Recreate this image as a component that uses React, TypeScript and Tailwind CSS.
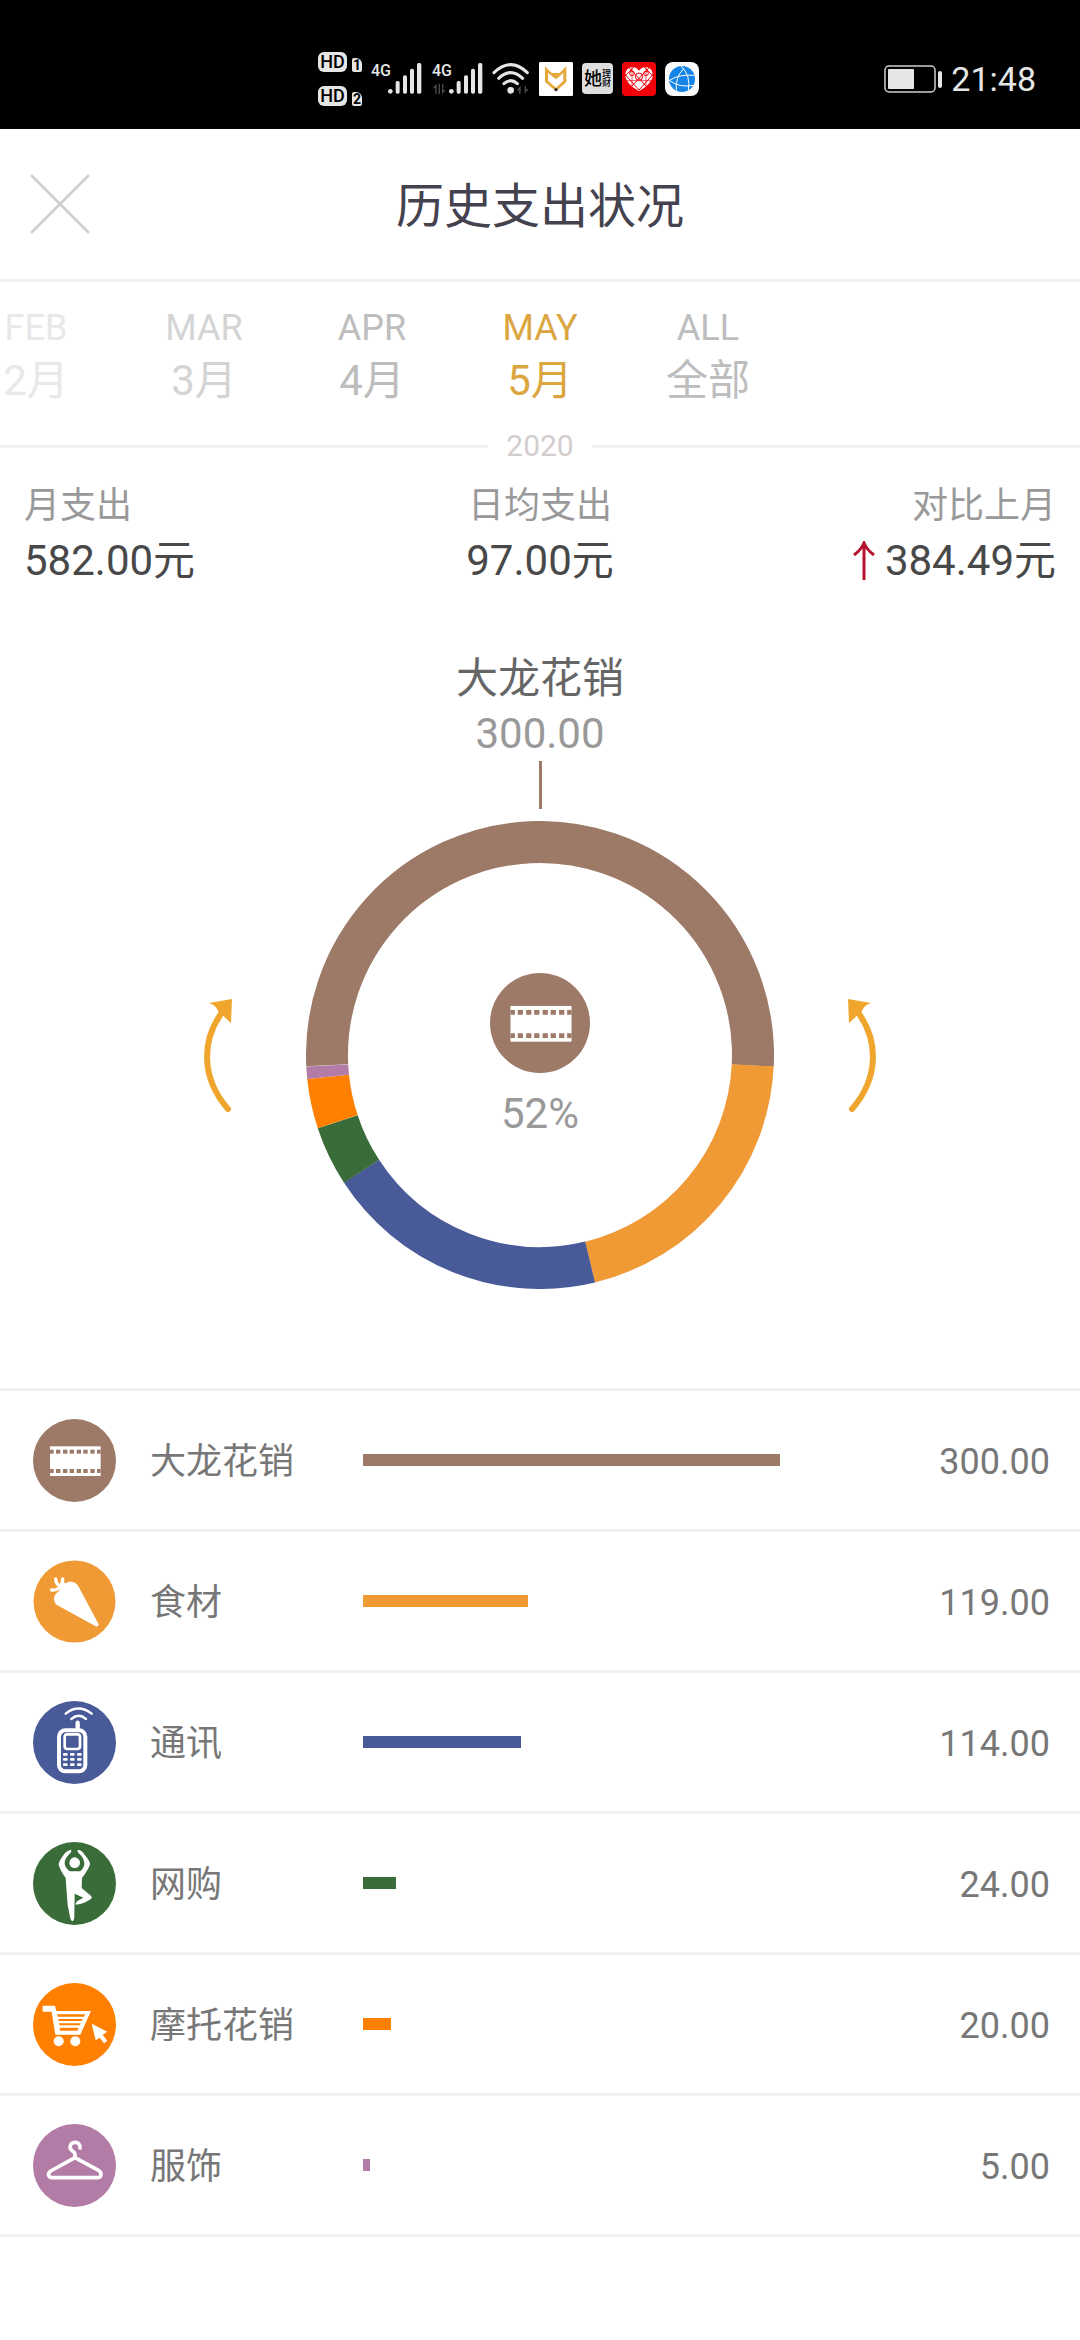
import { useState } from "react";
import type { ReactNode } from "react";

interface Category {
    name: string;
    amount: number;
    color: string;
    icon: ReactNode;
}

interface Month {
    en: string;
    zh: string;
    tone: string;
}

const FilmIcon = () => (
    <svg viewBox="0 0 249 249" className="h-full w-full" aria-hidden="true">
        <circle cx="124.5" cy="124.5" r="124.5" fill="#9d7967" />
        <rect x="51" y="82" width="152" height="89" fill="#fff" />
        {[51, 69, 90, 110, 131, 151, 172, 192].map((x, i) => {
            const w = i === 0 || i === 7 ? 11 : 13;
            return (
                <g key={x} fill="#9d7967">
                    <rect x={x} y="92" width={w} height="12" />
                    <rect x={x} y="150" width={w} height="12" />
                </g>
            );
        })}
    </svg>
);

const CarrotIcon = () => (
    <svg viewBox="0 0 249 249" className="h-full w-full" aria-hidden="true">
        <circle cx="124.5" cy="124.5" r="123" fill="#f09a36" />
        <path
            d="M98 70Q106 64 116 65Q130 67 137 80L197 193Q198 201 188 199L72 135Q62 127 63 113Q65 103 78 92Q88 78 98 70Z"
            fill="#fff"
        />
        <g fill="none" stroke="#fff" strokeWidth="10" strokeLinecap="round">
            <path d="M68 57Q68 70 80 78" />
            <path d="M89 57Q90 70 80 80" />
            <path d="M56 90Q74 92 92 72" />
        </g>
    </svg>
);

const PhoneIcon = () => (
    <svg viewBox="0 0 249 249" className="h-full w-full" aria-hidden="true">
        <circle cx="124.5" cy="124.5" r="124.5" fill="#485a98" />
        <g fill="none" stroke="#fff" strokeLinecap="round">
            <rect x="78" y="88" width="79" height="123" rx="19" strokeWidth="12" />
            <rect x="95" y="100" width="46" height="44" rx="8" strokeWidth="8" />
            <path d="M134 65V84" strokeWidth="13" />
            <path d="M115 54Q137 35 159 54" strokeWidth="7" />
            <path d="M98 38Q136 7 176 38" strokeWidth="7" />
        </g>
        {[156, 171, 187].map((y) => (
            <g key={y} fill="#fff">
                <rect x="90" y={y} width="14" height="8" rx="3" />
                <rect x="111" y={y} width="14" height="8" rx="3" />
                <rect x="132" y={y} width="14" height="8" rx="3" />
            </g>
        ))}
    </svg>
);

const YogaIcon = () => (
    <svg viewBox="0 0 249 249" className="h-full w-full" aria-hidden="true">
        <circle cx="124.5" cy="124.5" r="124.5" fill="#3a6c3a" />
        <circle cx="125" cy="62" r="16" fill="#fff" />
        <path
            d="M113 23Q98 27 90 41Q77 58 77 68Q80 82 98 108L101 151Q102 190 111 225Q114 239 119 237Q124 236 124 220L125 155L151 167L133 177Q126 183 128 188Q142 188 157 181L174 171Q179 166 172 160L146 138L147 108Q168 80 171 66Q170 56 156 40Q148 25 135 23Q131 27 136 32Q152 46 154 62Q155 76 142 88L110 88Q94 76 95 60Q97 48 114 31Q117 26 113 23Z"
            fill="#fff"
        />
    </svg>
);

const CartIcon = () => (
    <svg viewBox="0 0 249 249" className="h-full w-full" aria-hidden="true">
        <circle cx="124.5" cy="124.5" r="124.5" fill="#ff8000" />
        <path d="M29 68H66L70 84H174L142 155H67L56 86H29Z" fill="#fff" />
        <g fill="#ff8000">
            <path d="M73 94H156L153 101H74Z" />
            <path d="M76 108H149L146 114H77Z" />
            <path d="M78 121H143L140 127H79Z" />
            <path d="M80 134H137L133 143H81Z" />
        </g>
        <circle cx="77" cy="175" r="15" fill="#fff" />
        <circle cx="127" cy="175" r="15" fill="#fff" />
        <path d="M176 122L223 146L209 155L223 173L213 181L200 164L188 172Z" fill="#fff" />
    </svg>
);

const HangerIcon = () => (
    <svg viewBox="0 0 249 249" className="h-full w-full" aria-hidden="true">
        <circle cx="124.5" cy="124.5" r="124.5" fill="#b27ca7" />
        <path
            d="M141 72C143 50 112 50 111 69C111 82 126 80 126 92V101M126 101L198 140C208 147 205 161 193 161H58C46 161 42 149 53 141Z"
            fill="none"
            stroke="#fff"
            strokeWidth="11"
            strokeLinecap="round"
            strokeLinejoin="round"
        />
    </svg>
);

const categories: Category[] = [
    { name: "大龙花销", amount: 300, color: "#9d7967", icon: <FilmIcon /> },
    { name: "食材", amount: 119, color: "#f09a36", icon: <CarrotIcon /> },
    { name: "通讯", amount: 114, color: "#485a98", icon: <PhoneIcon /> },
    { name: "网购", amount: 24, color: "#3a6c3a", icon: <YogaIcon /> },
    { name: "摩托花销", amount: 20, color: "#ff8000", icon: <CartIcon /> },
    { name: "服饰", amount: 5, color: "#b27ca7", icon: <HangerIcon /> },
];

const months: Month[] = [
    { en: "FEB", zh: "2月", tone: "text-[#e8e8e8]" },
    { en: "MAR", zh: "3月", tone: "text-[#d4d4d4]" },
    { en: "APR", zh: "4月", tone: "text-[#bdbdbd]" },
    { en: "MAY", zh: "5月", tone: "text-[#bdbdbd]" },
    { en: "ALL", zh: "全部", tone: "text-[#bdbdbd]" },
];

const total = categories.reduce((sum, c) => sum + c.amount, 0);
const max = Math.max(...categories.map((c) => c.amount));

function HdBadge({ sim }: { sim: string }) {
    return (
        <div className="flex items-end gap-[5px] text-black">
            <span className="flex h-5 w-[29px] items-center justify-center rounded-md bg-[#e6e6e6] text-[18px] leading-5 font-medium">
                HD
            </span>
            <span className="flex h-[14px] w-[10px] items-center justify-center rounded-xs rounded-tr-md bg-[#e6e6e6] text-[14px] leading-[14px] font-bold">
                {sim}
            </span>
        </div>
    );
}

function Signal({ data }: { data?: boolean }) {
    return (
        <div className="relative h-8 w-[51px]">
            <span className="absolute top-0 left-0 text-[16px] leading-4 font-medium">4G</span>
            <svg viewBox="0 0 153 96" className="h-full w-full" aria-hidden="true">
                {data && (
                    <path
                        d="M14 62V93H10V76H2ZM20 62H24V93H20ZM30 93V62H34V82H42Z"
                        fill="#4a4a4a"
                    />
                )}
                <g fill="#e6e6e6">
                    <circle cx="58" cy="85" r="7" />
                    <rect x="74" y="54" width="12" height="38" rx="5" />
                    <rect x="96" y="37" width="12" height="55" rx="5" />
                    <rect x="117" y="17" width="12" height="75" rx="5" />
                    <rect x="138" y="0" width="13" height="92" rx="5" />
                </g>
            </svg>
        </div>
    );
}

function StatusBar() {
    return (
        <div className="flex h-[129px] items-center justify-between bg-black pt-7 pr-11 pl-[318px] text-[#e6e6e6]">
            <div className="flex items-center gap-[9px]">
                <div className="flex flex-col gap-[14px]">
                    <HdBadge sim="1" />
                    <HdBadge sim="2" />
                </div>
                <div className="flex gap-[10px]">
                    <Signal />
                    <Signal data />
                </div>
                <svg viewBox="0 0 114 96" className="h-8 w-[38px]" aria-hidden="true">
                    <g fill="none" stroke="#e6e6e6" strokeWidth="9" strokeLinecap="round">
                        <path d="M6 29Q56 -19 106 29" />
                        <path d="M20 46Q56 12 92 46" />
                        <path d="M36 62Q56 44 76 62" />
                    </g>
                    <circle cx="56" cy="82" r="10" fill="#e6e6e6" />
                    <path d="M86 68V92H81V82H74ZM98 92V68H102V78H110Z" fill="#4a4a4a" />
                </svg>
                <svg viewBox="0 0 102 102" className="h-[34px] w-[34px]" aria-hidden="true">
                    <rect width="102" height="102" rx="4" fill="#fff" />
                    <path
                        d="M18 13L38 33H62L82 13V60L51 88L18 60Z M27 32V56L51 77L73 56V32L62 43L51 52L39 43Z"
                        fill="#e5a83b"
                        fillRule="evenodd"
                    />
                    <circle cx="51" cy="83" r="5" fill="#333" />
                </svg>
                <div className="flex h-[31px] w-[31px] items-center justify-center rounded-sm bg-[#dedede] text-black">
                    <span className="text-[18px] leading-5 font-medium">她</span>
                    <span className="w-[9px] text-[9px] leading-[9px] font-medium">理财</span>
                </div>
                <svg viewBox="0 0 102 102" className="h-[34px] w-[34px]" aria-hidden="true">
                    <rect width="102" height="102" rx="12" fill="#f00008" />
                    <path
                        d="M51 26Q40 12 26 16Q8 22 10 44Q14 66 51 87Q88 66 92 44Q94 22 76 16Q62 12 51 26Z"
                        fill="#fff"
                    />
                    <g fill="none" stroke="#f00008" strokeWidth="3">
                        <path d="M20 16L72 72M82 16L30 72M8 36L51 84L94 36M36 14L8 44M66 14L94 44" />
                        <path d="M8 56H94M30 14V72M72 14V72" strokeWidth="2" />
                        <circle cx="51" cy="44" r="11" />
                        <circle cx="30" cy="34" r="7" />
                        <circle cx="72" cy="34" r="7" />
                    </g>
                </svg>
                <svg viewBox="0 0 102 102" className="h-[34px] w-[34px]" aria-hidden="true">
                    <rect width="102" height="102" rx="24" fill="#fafafa" />
                    <circle cx="51" cy="51" r="39" fill="#1484e6" />
                    <g fill="none" stroke="#fff" strokeWidth="3">
                        <path d="M48 12Q78 40 70 86" />
                        <path d="M56 20Q30 46 34 86" />
                        <path d="M12 56Q40 36 88 40" />
                        <path d="M14 56Q44 78 86 70" />
                    </g>
                </svg>
            </div>
            <div className="flex items-center gap-[9px]">
                <svg viewBox="0 0 58 28" className="h-7 w-[58px]" aria-hidden="true">
                    <rect x="1" y="1" width="50" height="26" rx="4" fill="none" stroke="#cfcfcf" strokeWidth="1.5" />
                    <rect x="4" y="4" width="26" height="20" rx="1" fill="#e6e6e6" />
                    <rect x="54" y="6" width="4" height="17" rx="2" fill="#e6e6e6" />
                </svg>
                <span className="text-[34px] leading-10">21:48</span>
            </div>
        </div>
    );
}

function SwipeArrow({ flip }: { flip?: boolean }) {
    return (
        <svg
            viewBox="0 0 32 114"
            className={flip ? "h-[114px] w-8 -scale-x-100" : "h-[114px] w-8"}
            aria-hidden="true"
        >
            <path d="M25 111C-2 80 -2 42 20 13" fill="none" stroke="#f0a52d" strokeWidth="6" strokeLinecap="round" />
            <path d="M29 1L6 5Q13 7 15 13L28 25Z" fill="#f0a52d" />
        </svg>
    );
}

function Ring() {
    const r = 213;
    const length = 2 * Math.PI * r;
    // the biggest slice is centred on twelve o'clock
    let angle = -90 - (categories[0].amount / total) * 180;

    return (
        <svg viewBox="0 0 468 468" className="h-full w-full" role="img" aria-label="支出占比">
            {categories.map((c) => {
                const start = angle;
                const share = c.amount / total;
                angle += share * 360;
                return (
                    <circle
                        key={c.name}
                        cx="234"
                        cy="234"
                        r={r}
                        fill="none"
                        stroke={c.color}
                        strokeWidth="42"
                        strokeDasharray={`${share * length} ${length}`}
                        transform={`rotate(${start} 234 234)`}
                    />
                );
            })}
        </svg>
    );
}

export default function App() {
    const [month, setMonth] = useState("MAY");
    const top = categories[0];

    return (
        <div className="min-h-screen bg-white font-['Roboto','Noto_Sans_CJK_SC',sans-serif]">
            <StatusBar />

            <header className="grid h-[153px] grid-cols-[60px_1fr_60px] items-center border-b-3 border-[#f0f0f0] px-[30px]">
                <button type="button" aria-label="关闭" className="h-[60px] w-[60px]">
                    <svg viewBox="0 0 60 60" className="h-full w-full">
                        <path d="M1 1L59 59M59 1L1 59" stroke="#cfcfcf" strokeWidth="2.5" />
                    </svg>
                </button>
                <h1 className="pt-[6px] text-center text-5xl leading-[60px] text-[#45424f]">历史支出状况</h1>
            </header>

            <nav className="flex justify-center overflow-hidden pt-[22px]">
                {months.map((m) => (
                    <button
                        key={m.en}
                        type="button"
                        onClick={() => setMonth(m.en)}
                        className={`w-[168px] shrink-0 ${m.en === month ? "text-[#dba63f]" : m.tone}`}
                    >
                        <span className="block text-4xl leading-[48px]">{m.en}</span>
                        <span className="block text-[42px] leading-[58px]">{m.zh}</span>
                    </button>
                ))}
                {/* keeps May in the middle of the strip */}
                <div className="w-[336px] shrink-0" />
            </nav>

            <div className="flex items-center pt-[18px]">
                <div className="h-[3px] flex-1 bg-[#f0f0f0]" />
                <span className="w-[104px] text-center text-[30px] leading-9 text-[#d3cdcd]">2020</span>
                <div className="h-[3px] flex-1 bg-[#f0f0f0]" />
            </div>

            <dl className="grid grid-cols-3 px-6 pt-4 text-[42px] leading-[58px] text-[#484848]">
                <div>
                    <dt className="text-4xl leading-[52px] text-[#999]">月支出</dt>
                    <dd>582.00元</dd>
                </div>
                <div className="text-center">
                    <dt className="text-4xl leading-[52px] text-[#999]">日均支出</dt>
                    <dd>97.00元</dd>
                </div>
                <div className="text-right">
                    <dt className="text-4xl leading-[52px] text-[#999]">对比上月</dt>
                    <dd className="flex items-center justify-end gap-[10px]">
                        <svg viewBox="0 0 22 40" className="h-10 w-[22px]" aria-label="上升">
                            <path d="M11 39V2M1 14Q8 9 11 2Q14 9 21 14" fill="none" stroke="#b5122f" strokeWidth="3" />
                        </svg>
                        384.49元
                    </dd>
                </div>
            </dl>

            <section className="flex flex-col items-center pt-[61px] pb-[99px]">
                <h2 className="text-[42px] leading-[56px] text-[#666]">{top.name}</h2>
                <p className="text-[42px] leading-[54px] text-[#999]">{top.amount.toFixed(2)}</p>
                <div className="mb-3 h-12 w-[3px] bg-[#9d7967]" />
                <div className="flex items-center justify-center gap-[71px]">
                    <SwipeArrow />
                    <div className="relative h-[468px] w-[468px]">
                        <Ring />
                        <div className="absolute inset-0 flex flex-col items-center gap-[13px] pt-[152px]">
                            <div className="h-[100px] w-[100px]">{top.icon}</div>
                            <span className="text-[42px] leading-[56px] text-[#999]">
                                {Math.round((top.amount / total) * 100)}%
                            </span>
                        </div>
                    </div>
                    <SwipeArrow flip />
                </div>
            </section>

            <ul className="border-t-3 border-[#f0f0f0] text-4xl leading-[48px] text-[#777]">
                {categories.map((c) => (
                    <li key={c.name} className="flex h-[141px] items-center border-b-3 border-[#f0f0f0] pr-[30px] pl-[33px]">
                        <div className="h-[83px] w-[83px]">{c.icon}</div>
                        <span className="w-[247px] pt-1 pl-[34px]">{c.name}</span>
                        <div className="flex-1">
                            <div
                                className="h-3"
                                style={{ width: `${(c.amount / max) * 100}%`, backgroundColor: c.color }}
                            />
                        </div>
                        <span className="w-[270px] pt-1 text-right">{c.amount.toFixed(2)}</span>
                    </li>
                ))}
            </ul>
        </div>
    );
}
